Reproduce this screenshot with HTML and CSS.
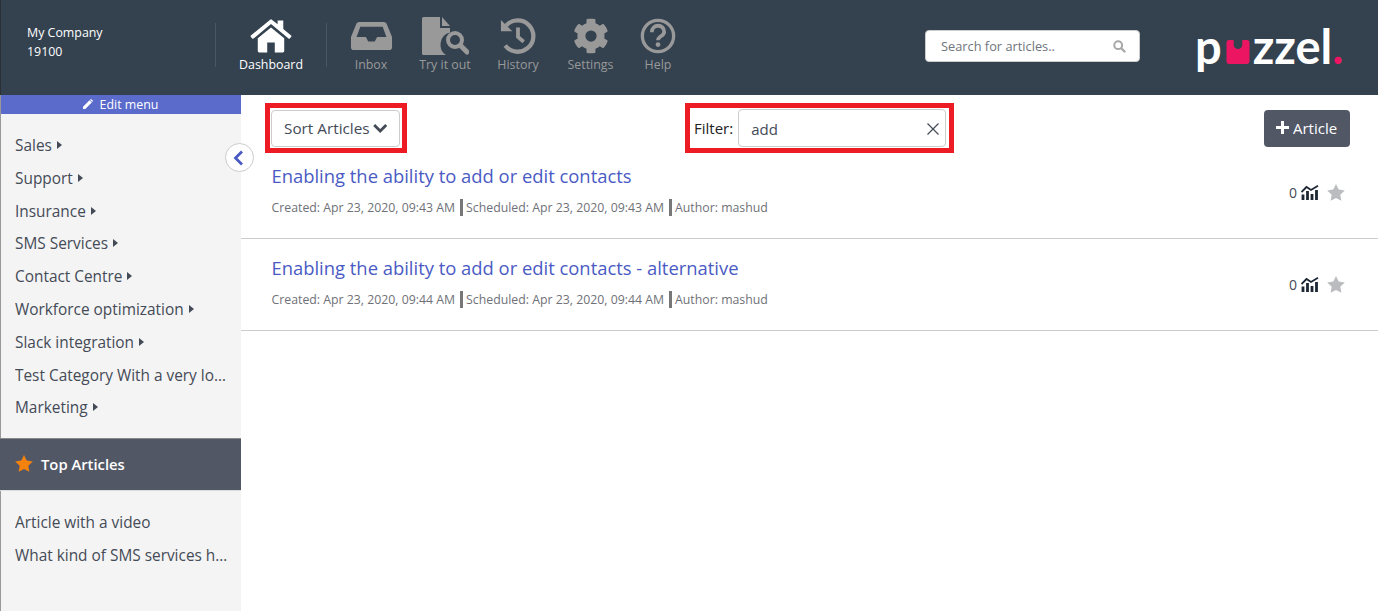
FILE: index.html
```html
<!DOCTYPE html>
<html lang="en">
<head>
    <meta charset="UTF-8">
    <meta name="viewport" content="width=device-width, initial-scale=1.0">
    <title>Puzzel Knowledge Base</title>
    <link rel="stylesheet" href="styles.css">
</head>
<body>
    <header class="topbar">
        <div class="company">
            <div>My Company</div>
            <div>19100</div>
        </div>
        <nav class="topnav">
            <a class="nav-item active nav-home">
                <svg width="42" height="34" viewBox="0 0 44 36"><path fill="#fff" d="M22 9 8 20.500V34a1.500 1.500 0 0 0 1.500 1.500H18V25h8v10.500h8.500A1.500 1.500 0 0 0 36 34V20.500z"/><path fill="#fff" d="M43.300 17.400 35 10.500V1.500h-6v4L22.900.700a1.500 1.500 0 0 0-1.800 0L.7 17.400a1 1 0 0 0-.1 1.400l1.500 1.800a1 1 0 0 0 1.400.1L22 5.300l18.500 15.400a1 1 0 0 0 1.400-.1l1.500-1.800a1 1 0 0 0-.1-1.400z"/></svg>
                <span>Dashboard</span>
            </a>
            <a class="nav-item nav-inbox">
                <svg width="43" height="28" viewBox="0 0 44 30"><path fill="#999" fill-rule="evenodd" d="M9 0h26c1.500 0 2.500.8 3.200 2L44 16v11a3 3 0 0 1-3 3H3a3 3 0 0 1-3-3V16L5.800 2C6.500.8 7.500 0 9 0zm1 5L6 16h10l2.500 5h7l2.500-5h10L34 5z"/></svg>
                <span>Inbox</span>
            </a>
            <a class="nav-item nav-try">
                <svg width="47" height="38" viewBox="0 0 47 38"><path fill="#999" d="M0 1.500A1.500 1.500 0 0 1 1.500 0H18v11h10v4.500A12.500 12.500 0 0 0 24 38H1.500A1.500 1.500 0 0 1 0 36.500z"/><path fill="#999" d="M20 0l8 9h-8z"/><circle cx="33" cy="23" r="7" fill="none" stroke="#999" stroke-width="4"/><path stroke="#999" stroke-width="5" stroke-linecap="round" d="M39 29l6 6"/></svg>
                <span>Try it out</span>
            </a>
            <a class="nav-item nav-history">
                <svg width="36" height="36" viewBox="0 0 38 38"><path fill="none" stroke="#999" stroke-width="4.500" d="M6.500 8a16.500 16.500 0 1 1-1 21"/><path fill="#999" d="M1 2v12h12z"/><path fill="none" stroke="#999" stroke-width="4" d="M19 10v10l6 5"/></svg>
                <span>History</span>
            </a>
            <a class="nav-item nav-settings">
                <svg width="36" height="36" viewBox="0 0 512 512"><path fill="#999" d="M487 316l-42-25a190 190 0 0 0 0-70l42-25c5-3 7-8 5-14-11-35-30-67-55-94-4-4-10-5-15-2l-42 25a188 188 0 0 0-61-35V27c0-6-4-11-9-12-37-8-74-8-109 0-5 1-9 6-9 12v49a194 194 0 0 0-61 35L89 86c-5-3-11-2-15 2-25 27-44 59-55 94-2 6 0 11 5 14l42 25a190 190 0 0 0 0 70l-42 25c-5 3-7 8-5 14 11 35 30 67 55 94 4 4 10 5 15 2l42-25a188 188 0 0 0 61 35v49c0 6 4 11 9 12 37 8 74 8 109 0 5-1 9-6 9-12v-49a194 194 0 0 0 61-35l42 25c5 3 11 2 15-2 25-27 44-59 55-94 2-6 0-11-5-14zM256 336a80 80 0 1 1 0-160 80 80 0 0 1 0 160z"/></svg>
                <span>Settings</span>
            </a>
            <a class="nav-item nav-help">
                <svg width="36" height="36" viewBox="0 0 38 38"><circle cx="19" cy="19" r="16.500" fill="none" stroke="#999" stroke-width="3.500"/><path fill="none" stroke="#999" stroke-width="4" d="M12.500 15c0-9 13-9 13-.500 0 5-6.500 4.500-6.500 9"/><circle cx="19" cy="28" r="2.500" fill="#999"/></svg>
                <span>Help</span>
            </a>
        </nav>
        <div class="search-box">
            <span>Search for articles..</span>
            <svg width="13" height="13" viewBox="0 0 13 13"><circle cx="5.200" cy="5.200" r="3.900" fill="none" stroke="#a8a8a8" stroke-width="2"/><path stroke="#a8a8a8" stroke-width="2.400" stroke-linecap="round" d="M8.500 8.500l3 3"/></svg>
        </div>
        <div class="logo">
            <span>p</span><svg class="logo-u" width="24" height="24" viewBox="0 0 24 25"><path fill="#ec1561" d="M3 0h4.500v5a4.500 4.500 0 0 0 9 0V0H21a3 3 0 0 1 3 3v19a3 3 0 0 1-3 3H3a3 3 0 0 1-3-3V3a3 3 0 0 1 3-3z"/></svg><span>zzel</span><span class="logo-dot">.</span>
        </div>
    </header>

    <div class="page">
        <aside class="sidebar">
            <div class="edit-menu">
                <svg width="11" height="11" viewBox="0 0 11 11"><path fill="#fff" d="M7.500 1.200l2.300 2.300L3.300 10H1v-2.300zM8.300.5a1 1 0 0 1 1.400 0l.8.800a1 1 0 0 1 0 1.400l-.3.300L7.900.8z"/></svg>
                <span>Edit menu</span>
            </div>
            <ul class="side-list categories">
                <li>Sales <i class="caret"></i></li>
                <li>Support <i class="caret"></i></li>
                <li>Insurance <i class="caret"></i></li>
                <li>SMS Services <i class="caret"></i></li>
                <li>Contact Centre <i class="caret"></i></li>
                <li>Workforce optimization <i class="caret"></i></li>
                <li>Slack integration <i class="caret"></i></li>
                <li>Test Category With a very long name</li>
                <li>Marketing <i class="caret"></i></li>
            </ul>
            <div class="top-head">
                <svg width="18" height="17" viewBox="0 0 18 17"><path fill="#f5820d" d="M9 0l2.700 5.600 6.100.8-4.500 4.300 1.100 6.100L9 13.900l-5.400 2.900 1.100-6.100L.2 6.400l6.100-.8z"/></svg>
                <span>Top Articles</span>
            </div>
            <ul class="side-list top-list">
                <li>Article with a video</li>
                <li>What kind of SMS services have we got</li>
            </ul>
            <button class="collapse-btn">
                <svg width="12" height="16" viewBox="0 0 12 16"><path fill="none" stroke="#4a5ac4" stroke-width="2.800" d="M9 1.500 2.500 8 9 14.500"/></svg>
            </button>
        </aside>

        <main class="content">
            <div class="toolbar">
                <div class="marked sort">
                    <button class="sort-btn">
                        <span>Sort Articles</span>
                        <svg width="15" height="10" viewBox="0 0 14 10"><path fill="none" stroke="#444b57" stroke-width="2.800" d="M1 2l6 6 6-6"/></svg>
                    </button>
                </div>
                <div class="marked filter">
                    <span class="filter-label">Filter:</span>
                    <div class="filter-input">
                        <span>add</span>
                        <svg width="12" height="12" viewBox="0 0 12 12"><path stroke="#444b57" stroke-width="1.200" d="M.5.500l11 11M11.500.500l-11 11"/></svg>
                    </div>
                </div>
                <button class="add-btn">
                    <svg width="13" height="13" viewBox="0 0 13 13"><path stroke="#fff" stroke-width="3" d="M6.500 0v13M0 6.500h13"/></svg>
                    <span>Article</span>
                </button>
            </div>

            <article class="row">
                <div>
                    <h2>Enabling the ability to add or edit contacts</h2>
                    <p class="meta"><span>Created: Apr 23, 2020, 09:43 AM</span><span>Scheduled: Apr 23, 2020, 09:43 AM</span><span>Author: mashud</span></p>
                </div>
                <div class="stats">
                    <span>0</span>
                    <svg class="chart" width="18" height="15" viewBox="0 0 18 15"><path fill="none" stroke="#1c2733" stroke-width="1.800" d="M.5 7 5.500 2 10 5 17 .8"/><path stroke="#1c2733" stroke-width="2.800" d="M2 15V9.500M6.500 15V6M11 15V9M15.500 15V5"/></svg>
                    <svg width="18" height="17" viewBox="0 0 18 17"><path fill="#bbbcc0" d="M9 0l2.700 5.600 6.100.8-4.500 4.300 1.100 6.100L9 13.900l-5.400 2.900 1.100-6.100L.2 6.400l6.100-.8z"/></svg>
                </div>
            </article>
            <article class="row">
                <div>
                    <h2>Enabling the ability to add or edit contacts - alternative</h2>
                    <p class="meta"><span>Created: Apr 23, 2020, 09:44 AM</span><span>Scheduled: Apr 23, 2020, 09:44 AM</span><span>Author: mashud</span></p>
                </div>
                <div class="stats">
                    <span>0</span>
                    <svg class="chart" width="18" height="15" viewBox="0 0 18 15"><path fill="none" stroke="#1c2733" stroke-width="1.800" d="M.5 7 5.500 2 10 5 17 .8"/><path stroke="#1c2733" stroke-width="2.800" d="M2 15V9.500M6.500 15V6M11 15V9M15.500 15V5"/></svg>
                    <svg width="18" height="17" viewBox="0 0 18 17"><path fill="#bbbcc0" d="M9 0l2.700 5.600 6.100.8-4.500 4.300 1.100 6.100L9 13.900l-5.400 2.900 1.100-6.100L.2 6.400l6.100-.8z"/></svg>
                </div>
            </article>
        </main>
    </div>
</body>
</html>
```

FILE: styles.css
```css
* {
    box-sizing: border-box;
}

html, body {
    height: 100%;
}

body {
    margin: 0;
    overflow: hidden;
    background-color: #fff;
    color: #444b57;
    font-family: "Open Sans", sans-serif;
}

/* top bar */
.topbar {
    display: flex;
    align-items: flex-start;
    height: 95px;
    background-color: #344250;
    border-left: 1px solid #2a2f35;
}

.company {
    width: 214px;
    height: 46px;
    margin-top: 23px;
    padding-left: 26px;
    color: #fff;
    font-size: 12.4px;
    line-height: 19px;
}

.topnav {
    display: flex;
    height: 95px;
}

.nav-item {
    display: flex;
    flex-direction: column;
    align-items: center;
    justify-content: flex-end;
    height: 73px;
    color: #999;
    font-size: 12.4px;
    line-height: 16px;
}

.nav-item svg {
    flex: none;
    margin-bottom: 3px;
}

.nav-item.active {
    color: #fff;
}

.nav-home {
    width: 112px;
    height: 44px;
    margin-top: 23px;
    justify-content: flex-start;
    border-left: 1px solid #4a5763;
    border-right: 1px solid #4a5763;
}

.nav-home svg {
    margin-top: -4px;
    margin-bottom: 4px;
}

.nav-inbox { width: 88px; }
.nav-inbox svg { margin-bottom: 7px; }
.nav-try { width: 60px; }
.nav-try svg { margin-bottom: 2px; }
.nav-history { width: 86px; }
.nav-settings { width: 59px; }
.nav-help { width: 76px; }

.search-box {
    display: flex;
    align-items: center;
    justify-content: space-between;
    width: 215px;
    height: 32px;
    margin: 30px 0 0 229px;
    padding: 0 13px 0 15px;
    background-color: #fff;
    border: 1px solid #ccc;
    border-radius: 4px;
    color: #6f747c;
    font-size: 12.8px;
}

.logo {
    display: flex;
    align-items: baseline;
    margin: 16px 0 0 55px;
    color: #fff;
    font-family: "Lato", sans-serif;
    font-size: 47px;
    font-weight: 700;
    line-height: 60px;
}

.logo-u {
    margin: 0 3px 0 4px;
}

.logo-dot {
    color: #ec1561;
}

/* layout */
.page {
    display: flex;
    height: 516px;
}

/* sidebar */
.sidebar {
    position: relative;
    width: 241px;
    flex: none;
    background-color: #f4f4f4;
    border-left: 1px solid #999;
}

.edit-menu {
    display: flex;
    align-items: center;
    justify-content: center;
    gap: 7px;
    height: 19px;
    padding-right: 2px;
    background-color: #5a6bcc;
    color: #fff;
    font-size: 12.4px;
}

.side-list {
    list-style: none;
    margin: 0;
    padding: 0 0 0 14px;
    font-size: 15.4px;
    line-height: 32.8px;
}

.side-list li {
    width: 214px;
    white-space: nowrap;
    overflow: hidden;
    text-overflow: ellipsis;
}

.categories {
    height: 324px;
    padding-top: 16px;
}

.caret {
    display: inline-block;
    margin-left: 1px;
    vertical-align: 2px;
    border-left: 5px solid #444b57;
    border-top: 4.5px solid transparent;
    border-bottom: 4.5px solid transparent;
}

.top-head {
    display: flex;
    align-items: center;
    gap: 8px;
    height: 53px;
    margin-left: -1px;
    padding: 0 0 2px 15px;
    background-color: #525766;
    border-top: 1px solid #888;
    border-bottom: 1px solid #ddd;
    color: #fff;
    font-size: 14.8px;
    font-weight: 600;
}

.top-list {
    padding-top: 16px;
}

.collapse-btn {
    position: absolute;
    top: 48px;
    left: 224px;
    display: flex;
    align-items: center;
    justify-content: center;
    width: 29px;
    height: 29px;
    padding: 0 1px 0 0;
    background-color: #fff;
    border: 1px solid #ccc;
    border-radius: 50%;
}

/* main content */
.content {
    flex: 1;
    min-width: 0;
}

.toolbar {
    display: flex;
    align-items: flex-start;
    height: 58px;
    padding: 8px 28px 0 24px;
}

.marked {
    display: flex;
    align-items: center;
    height: 50px;
    padding: 0 1px;
    border: 5px solid #ed1c24;
}

.sort {
    padding-right: 2px;
}

.sort-btn {
    display: flex;
    align-items: center;
    gap: 3px;
    width: 129px;
    height: 37px;
    padding: 0 12px;
    background-color: #fff;
    border: 1px solid #ccc;
    border-radius: 4px;
    color: #444b57;
    font-family: inherit;
    font-size: 15.3px;
    white-space: nowrap;
}

.filter {
    width: 269px;
    margin-left: 278px;
    padding: 0 3px 0 4px;
    gap: 5px;
}

.filter-label {
    color: #222;
    font-size: 15px;
}

.filter-input {
    display: flex;
    align-items: center;
    justify-content: space-between;
    width: 208px;
    height: 38px;
    padding: 1px 6px 0 12px;
    border: 1px solid #ccc;
    border-radius: 4px;
    font-size: 15px;
}

.add-btn {
    display: flex;
    align-items: center;
    gap: 4px;
    width: 86px;
    height: 37px;
    margin: 7px 0 0 auto;
    padding: 0 0 2px 12px;
    background-color: #525766;
    border: none;
    border-radius: 4px;
    color: #fff;
    font-family: inherit;
    font-size: 15px;
}

.row {
    display: flex;
    justify-content: space-between;
    height: 86px;
    padding: 10px 33px 0 30.5px;
    border-bottom: 1px solid #ccc;
}

.row + .row {
    height: 92px;
    padding-top: 16px;
}

.row h2 {
    margin: 0;
    color: #4a5ac4;
    font-size: 18.4px;
    font-weight: 400;
    line-height: 26px;
}

.meta {
    display: flex;
    margin: 10px 0 0;
    color: #6f7178;
    font-size: 12.3px;
    line-height: 17px;
}

.meta span + span {
    margin-left: 5px;
    padding-left: 3px;
    border-left: 3px solid #777;
}

.stats {
    display: flex;
    align-items: center;
    gap: 4px;
    height: 32px;
    margin-top: 13px;
    color: #444b57;
    font-size: 14px;
}

.stats svg:last-child {
    margin-left: 4px;
}
```
